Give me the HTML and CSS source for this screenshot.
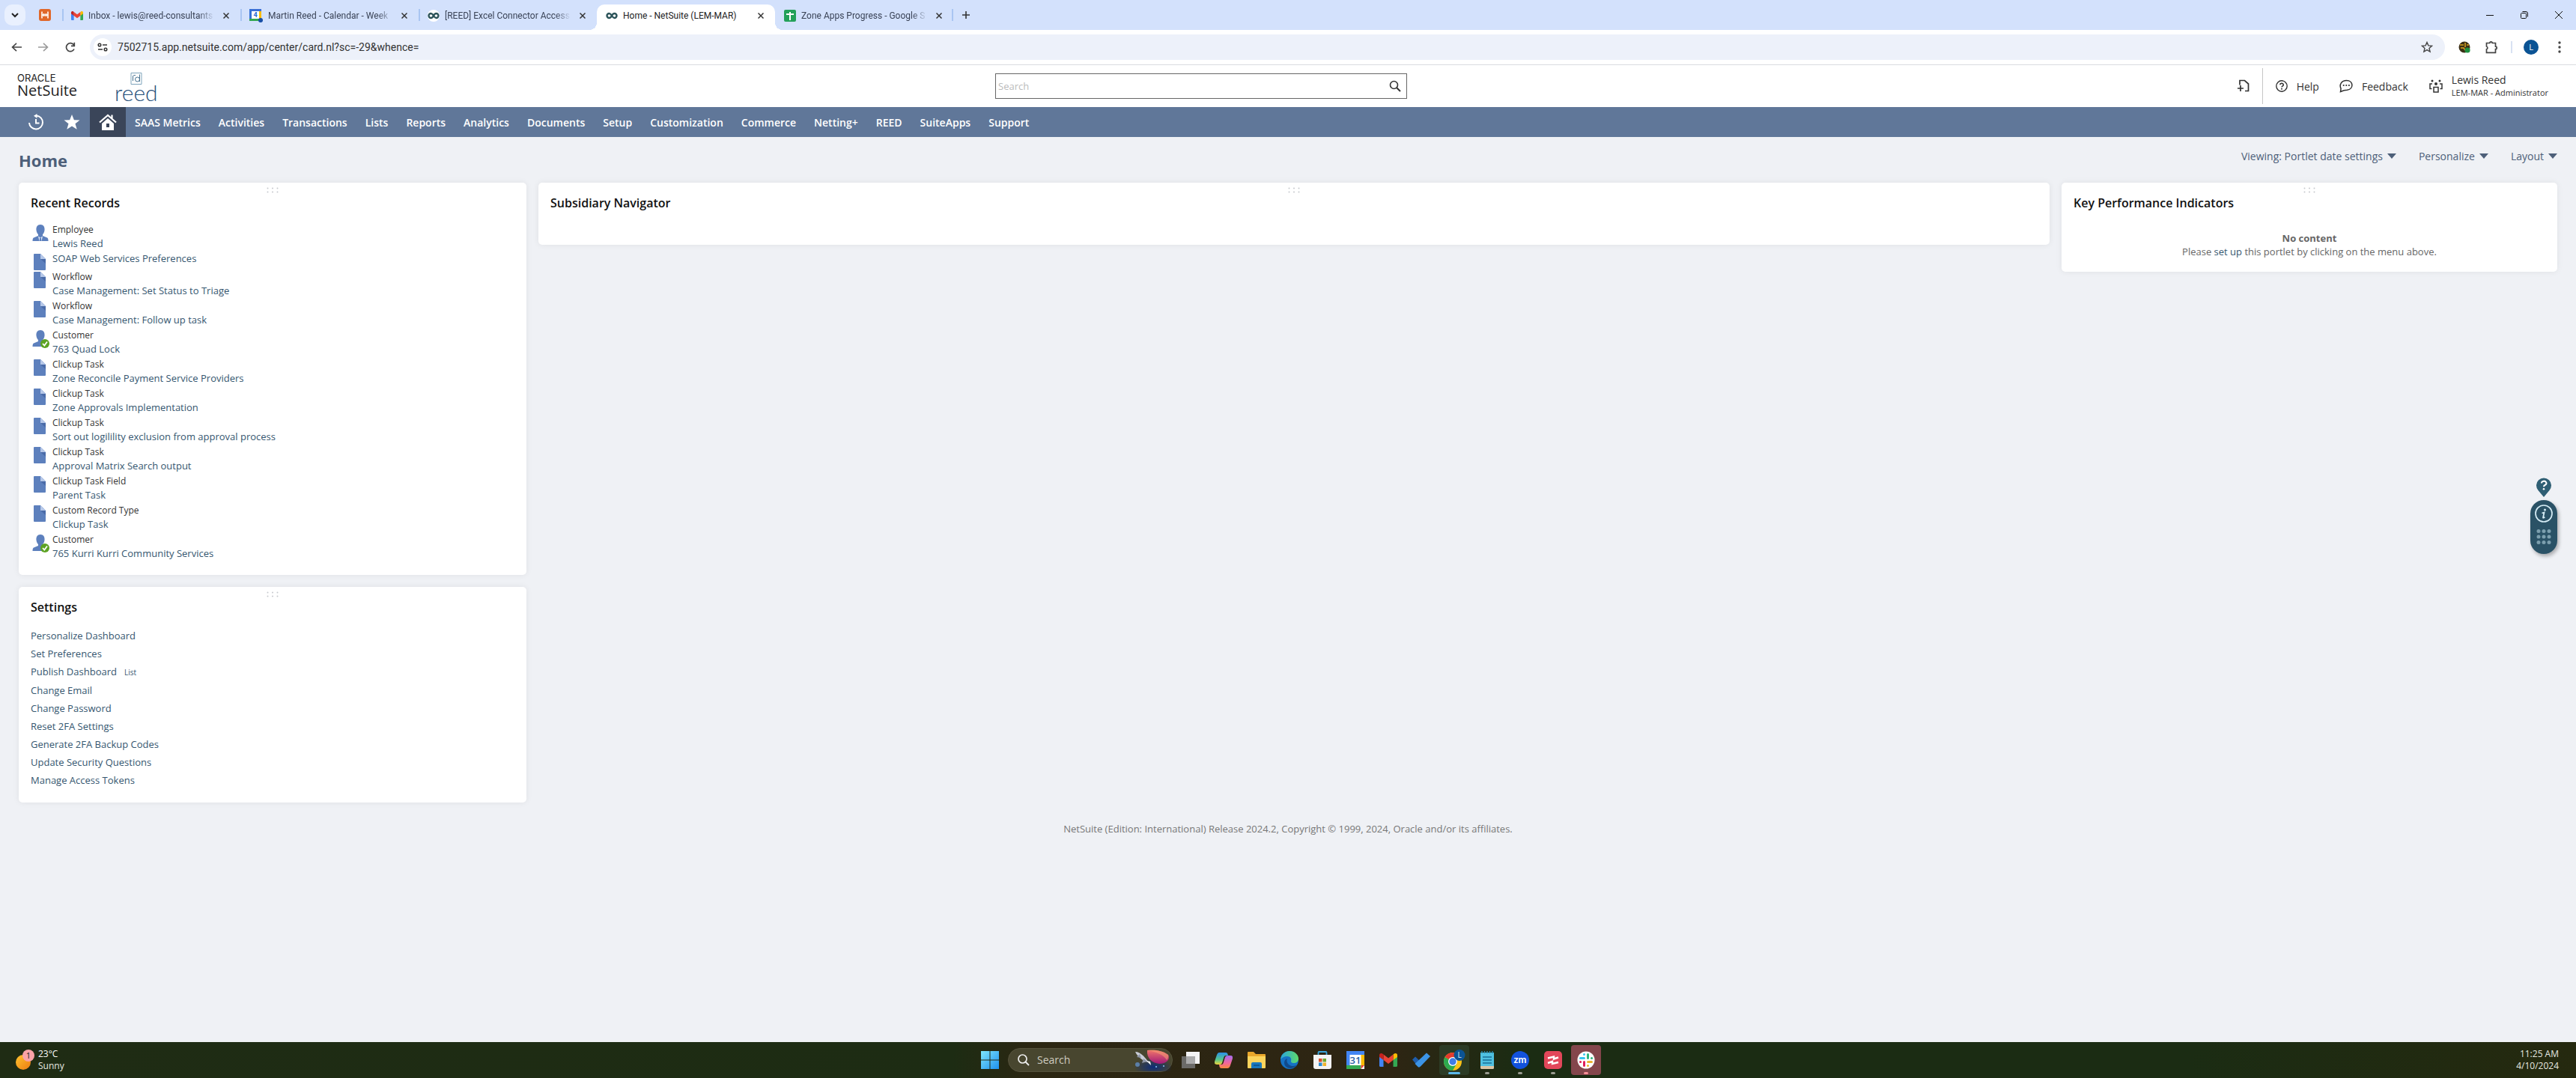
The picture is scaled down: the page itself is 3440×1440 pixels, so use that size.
FILE: index.html
```html
<!DOCTYPE html>
<html lang="en">
<head>
<meta charset="UTF-8" />
<meta name="viewport" content="width=device-width, initial-scale=1" />
<title>Home - NetSuite (LEM-MAR)</title>
<link rel="stylesheet" href="styles.css">
</head>
<body>

<svg class="sprite" aria-hidden="true">
  <symbol id="i-close" viewBox="0 0 8 8"><path d="M.5.5l7 7M7.5.5l-7 7" stroke="currentColor" stroke-width="1.5" /></symbol>
  <symbol id="i-loop" viewBox="0 0 16 16">
    <path d="M8 8C6.500 5.500 5.800 5 4.500 5a3 3 0 0 0 0 6C6 11 7 10 8 8s2-3 3.500-3a3 3 0 0 1 0 6C10.200 11 9.500 10.500 8 8z" fill="none" stroke="#2b5359" stroke-width="2.400" />
  </symbol>
  <symbol id="i-gmail" viewBox="0 0 24 18">
    <path d="M0 2v14.500Q0 18 1.500 18H5.500V7z" fill="#4285f4" />
    <path d="M24 2v14.500q0 1.500-1.500 1.500H18.500V7z" fill="#34a853" />
    <path d="M18.500 1.500V9L24 5V2.500C24 0 21-.5 19.500.7z" fill="#fbbc04" />
    <path d="M5.500 9V1.500l6.500 5 6.500-5V9L12 14z" fill="#ea4335" />
    <path d="M0 2.500V5l5.500 4V1.500L4.500.7C3-.5 0 0 0 2.500z" fill="#c5221f" />
  </symbol>
  <symbol id="i-doc" viewBox="0 0 20 22">
    <path d="M2 1q0-1 1-1h8l7 7v14q0 1-1 1H3q-1 0-1-1z" fill="#5d80bd" />
    <path d="M11 7h7v6z" fill="#4a6ba8" />
    <path d="M11 0l7 7h-7z" fill="#b5c7e8" />
  </symbol>
  <symbol id="i-person" viewBox="0 0 22 22">
    <path d="M11 0c4 0 6 3 5.500 7.500-.4 3-1.500 4.500-2.500 5.500v2l6 2.500q1.500.7 1.500 4.500H.5q0-3.800 1.500-4.500L8 15v-2C7 12 5.900 10.500 5.500 7.500 5 3 7 0 11 0z" fill="#5d80bd" />
  </symbol>
  <symbol id="i-collar" viewBox="0 0 22 22">
    <path d="M8 15.500l3 2 3-2-1.500 6.500h-3z" fill="#dfe8f7" />
    <path d="M10.200 17.500h1.600l.6 4.500h-2.800z" fill="#5d80bd" />
  </symbol>
  <symbol id="i-check" viewBox="0 0 12 12">
    <circle cx="6" cy="6" r="6" fill="#5da323" />
    <path d="M3 6l2.300 2.500L9 3.500" fill="none" stroke="#fff" stroke-width="1.800" />
  </symbol>
  <symbol id="i-grip" viewBox="0 0 16 8">
    <g fill="#c6c9ce"><circle cx="1.500" cy="1.500" r="1" /><circle cx="8" cy="1.500" r="1" /><circle cx="14.500" cy="1.500" r="1" /><circle cx="1.500" cy="6.500" r="1" /><circle cx="8" cy="6.500" r="1" /><circle cx="14.500" cy="6.500" r="1" /></g>
  </symbol>
</svg>

<div class="tabstrip">
  <button class="tab-search" aria-label="Search tabs"><svg width="10" height="7" viewBox="0 0 10 7"><path d="M1 1l4 4 4-4" fill="none" stroke="#222" stroke-width="2" /></svg></button>
  <a class="tab-pinned" href="#" aria-label="Pinned tab">
    <svg width="16" height="16" viewBox="0 0 16 16"><rect width="16" height="16" rx="3" fill="#e0672a" /><path d="M4 3.500v9M12 3.500v9M4 8h8M6.500 6v4M9.500 6v4" stroke="#fff" stroke-width="1.600" /></svg>
  </a>
  <div class="tab">
    <svg class="favicon" width="16" height="12"><use href="#i-gmail" /></svg>
    <a href="#" class="tab-title fade">Inbox - lewis@reed-consultants</a>
    <button class="tab-close" aria-label="Close tab"><svg width="8" height="8"><use href="#i-close" /></svg></button>
  </div>
  <div class="tab">
    <svg class="favicon" width="18" height="18" viewBox="0 0 18 18"><path d="M0 0h16v16H0z" fill="#fff" /><path d="M0 0h16v3H0z" fill="#3b6fd6" /><path d="M0 0h3v16H0z" fill="#3571d6" /><path d="M13 3h3v10h-3z" fill="#fbbc04" /><path d="M0 13h13v3H0z" fill="#34a853" /><text x="8" y="11" class="cal-digit" text-anchor="middle">4</text><circle cx="15" cy="15" r="3" fill="#174ea6" /></svg>
    <a href="#" class="tab-title fade">Martin Reed - Calendar - Week</a>
    <button class="tab-close" aria-label="Close tab"><svg width="8" height="8"><use href="#i-close" /></svg></button>
  </div>
  <div class="tab">
    <svg class="favicon round" width="16" height="16"><use href="#i-loop" /></svg>
    <a href="#" class="tab-title fade">[REED] Excel Connector Access</a>
    <button class="tab-close" aria-label="Close tab"><svg width="8" height="8"><use href="#i-close" /></svg></button>
  </div>
  <div class="tab active">
    <svg class="favicon" width="16" height="16"><use href="#i-loop" /></svg>
    <a href="#" class="tab-title">Home - NetSuite (LEM-MAR)</a>
    <button class="tab-close" aria-label="Close tab"><svg width="8" height="8"><use href="#i-close" /></svg></button>
  </div>
  <div class="tab last">
    <svg class="favicon" width="16" height="16" viewBox="0 0 16 16"><rect width="16" height="16" rx="2" fill="#23a05a" /><path d="M8 3v11M3 6h10" stroke="#fff" stroke-width="2" /></svg>
    <a href="#" class="tab-title fade">Zone Apps Progress - Google S</a>
    <button class="tab-close" aria-label="Close tab"><svg width="8" height="8"><use href="#i-close" /></svg></button>
  </div>
  <button class="new-tab" aria-label="New tab"><svg width="10" height="10" viewBox="0 0 10 10"><path d="M5 0v10M0 5h10" stroke="#333" stroke-width="1.600" /></svg></button>
  <div class="window-controls">
    <button aria-label="Minimize"><svg width="10" height="10" viewBox="0 0 10 10"><path d="M0 5.500h10" stroke="#111" /></svg></button>
    <button aria-label="Restore"><svg width="10" height="10" viewBox="0 0 10 10"><path d="M.5 3.500q0-1 1-1h5q1 0 1 1v5q0 1-1 1h-5q-1 0-1-1zM2.500.5H7Q9.500.5 9.500 3v4.500" fill="none" stroke="#111" /></svg></button>
    <button aria-label="Close"><svg width="10" height="10" viewBox="0 0 10 10"><path d="M0 0l10 10M10 0L0 10" stroke="#111" /></svg></button>
  </div>
</div>

<div class="toolbar">
  <button aria-label="Back"><svg width="14" height="12" viewBox="0 0 14 12"><path d="M14 6H2M7 .8L1.500 6 7 11.200" fill="none" stroke="#444" stroke-width="1.600" /></svg></button>
  <button aria-label="Forward"><svg width="14" height="12" viewBox="0 0 14 12"><path d="M0 6h12M7 .8L12.500 6 7 11.200" fill="none" stroke="#9a9a9a" stroke-width="1.600" /></svg></button>
  <button aria-label="Reload"><svg width="14" height="14" viewBox="0 0 14 14"><path d="M12 9.500A5.500 5.500 0 1 1 11.500 4M12.300.8v4.500H8" fill="none" stroke="#444" stroke-width="1.700" /></svg></button>
  <div class="address">
    <span class="site-info"><svg width="14" height="12" viewBox="0 0 14 12"><g fill="none" stroke="#333" stroke-width="1.500"><circle cx="3" cy="3" r="1.800" /><path d="M7 3h6M1 9h6" /><circle cx="11" cy="9" r="1.800" /></g></svg></span>
    <input type="text" aria-label="Address" value="7502715.app.netsuite.com/app/center/card.nl?sc=-29&amp;whence=">
    <button aria-label="Bookmark"><svg width="16" height="16" viewBox="0 0 16 16"><path d="M8 1.500l1.900 4.400 4.700.4-3.600 3.100 1.100 4.700L8 11.600l-4.100 2.500L5 9.400 1.400 6.300l4.700-.4z" fill="none" stroke="#444" stroke-width="1.400" /></svg></button>
  </div>
  <div class="toolbar-right">
    <button aria-label="Extension"><svg width="16" height="16" viewBox="0 0 16 16"><circle cx="8" cy="8" r="7.500" fill="#3b2f16" /><path d="M2 5h5M9 2v6M3 9h4l2 3M11 5h3" stroke="#d9a520" fill="none" stroke-width="1.500" /><circle cx="12" cy="12" r="3.600" fill="#1e8e3e" /></svg></button>
    <button aria-label="Extensions"><svg width="17" height="18" viewBox="0 0 17 18"><path d="M1.500 3.500h4.300a1.700 1.700 0 0 1 3.400 0h4.300v4.700a1.700 1.700 0 0 1 0 3.400v4.700H1.500v-4.500a2 2 0 0 0 0-3.800z" fill="none" stroke="#444" stroke-width="1.700" /></svg></button>
    <span class="bar"></span>
    <button class="avatar" aria-label="Profile">L</button>
    <button aria-label="Menu"><svg width="4" height="16" viewBox="0 0 4 16"><g fill="#444"><circle cx="2" cy="2" r="1.700" /><circle cx="2" cy="8" r="1.700" /><circle cx="2" cy="14" r="1.700" /></g></svg></button>
  </div>
</div>

<header class="header">
  <div class="brand">
    <a href="#" class="netsuite"><span class="oracle">ORACLE</span><span class="suite">NetSuite</span></a>
    <a href="#" class="reed">
      <svg width="16" height="16" viewBox="0 0 16 16"><g fill="none" stroke="#44708f" stroke-width="1"><path d="M1 .5h14v15H1z" stroke="#7fa4bb" /><path d="M3.500 11V4.500Q4 3.500 7 3.500M12.500 2.500V12" /><circle cx="9.500" cy="9" r="3" /></g></svg>
      <span>reed</span>
    </a>
  </div>
  <form class="search">
    <input type="text" placeholder="Search" aria-label="Search">
    <button type="button" aria-label="Search"><svg width="16" height="16" viewBox="0 0 16 16"><circle cx="6.500" cy="6.500" r="5" fill="none" stroke="#333" stroke-width="1.600" /><path d="M10.200 10.200L15 15" stroke="#333" stroke-width="2" /></svg></button>
  </form>
  <div class="header-right">
    <button class="create" aria-label="Create new"><svg width="16" height="18" viewBox="0 0 16 18"><path d="M3 7.500V1.500h6.500l5 4.500v9.500H10M0 12h8M4 8v8" fill="none" stroke="#333" stroke-width="1.700" /></svg></button>
    <a href="#" class="help"><svg width="16" height="16" viewBox="0 0 16 16"><circle cx="8" cy="8" r="7.200" fill="none" stroke="#333" stroke-width="1.400" /><path d="M5.800 6.300a2.200 2 0 1 1 3.200 1.800q-1 .5-1 1.500" fill="none" stroke="#333" stroke-width="1.600" /><circle cx="8" cy="11.800" r="1" fill="#333" /></svg>Help</a>
    <a href="#" class="feedback"><svg width="18" height="18" viewBox="0 0 18 18"><path d="M1.500 16.500l.6-4.200C-.5 7 3 1.500 9.500 1.500c9.500 0 10 11.500.8 12.800q-3.800 0-8.800 2.200z" fill="none" stroke="#333" stroke-width="1.500" /><g fill="#333"><circle cx="5.700" cy="8" r="1.100" /><circle cx="9.300" cy="8" r="1.100" /><circle cx="12.900" cy="8" r="1.100" /></g></svg>Feedback</a>
    <a href="#" class="role">
      <svg width="18" height="18" viewBox="0 0 18 18"><g fill="none" stroke="#333" stroke-width="1.500"><path d="M6 10.500h6v6.500H6zM3.500 12.500H1V6h3M14.500 12.500H17V6h-3" /></g><g fill="#333"><circle cx="9" cy="6" r="2" /><circle cx="4" cy="2" r="1.500" /><circle cx="14" cy="2" r="1.500" /></g></svg>
      <span><b>Lewis Reed</b><small>LEM-MAR - Administrator</small></span>
    </a>
  </div>
</header>

<nav class="nav">
  <a href="#" class="nav-icon" aria-label="Recent records"><svg width="22" height="22" viewBox="0 0 22 22"><g fill="none" stroke="#fff" stroke-width="2"><path d="M11.500 2.500A9 9 0 1 1 2 12" /><path d="M11 7v5.500h4.500" /></g><path d="M12.500 0v6L8 2.700z" fill="#fff" /></svg></a>
  <a href="#" class="nav-icon" aria-label="Shortcuts"><svg width="22" height="20" viewBox="0 0 22 20"><path d="M11 0l2.900 7.300 7.600.3-6 4.700 2.200 7.500L11 15.500l-6.700 4.300 2.200-7.500-6-4.700 7.600-.3z" fill="#fff" /></svg></a>
  <a href="#" class="nav-icon current" aria-label="Home"><svg width="24" height="22" viewBox="0 0 24 22"><path d="M1 11.500L12 2l11 9.500M17.500 6V1.500" fill="none" stroke="#fff" stroke-width="2.200" /><path d="M12 6l8 7v9H4v-9zM10 13v5h4v-5z" fill="#fff" fill-rule="evenodd" /></svg></a>
  <a href="#">SAAS Metrics</a>
  <a href="#">Activities</a>
  <a href="#">Transactions</a>
  <a href="#">Lists</a>
  <a href="#">Reports</a>
  <a href="#">Analytics</a>
  <a href="#">Documents</a>
  <a href="#">Setup</a>
  <a href="#">Customization</a>
  <a href="#">Commerce</a>
  <a href="#">Netting+</a>
  <a href="#">REED</a>
  <a href="#">SuiteApps</a>
  <a href="#">Support</a>
</nav>

<main class="main">
  <div class="page-head">
    <h1>Home</h1>
    <div class="page-menus">
      <button>Viewing: Portlet date settings</button>
      <button>Personalize</button>
      <button>Layout</button>
    </div>
  </div>

  <div class="columns">
    <div class="column side">
      <section class="card">
        <svg class="grip" width="16" height="8"><use href="#i-grip" /></svg>
        <h2>Recent Records</h2>
        <ul class="records">
          <li><span class="rec-icon"><svg width="22" height="22"><use href="#i-person" /><use href="#i-collar" /></svg></span><div><span>Employee</span><a href="#">Lewis Reed</a></div></li>
          <li class="single"><span class="rec-icon"><svg width="20" height="22"><use href="#i-doc" /></svg></span><div><a href="#">SOAP Web Services Preferences</a></div></li>
          <li><span class="rec-icon"><svg width="20" height="22"><use href="#i-doc" /></svg></span><div><span>Workflow</span><a href="#">Case Management: Set Status to Triage</a></div></li>
          <li><span class="rec-icon"><svg width="20" height="22"><use href="#i-doc" /></svg></span><div><span>Workflow</span><a href="#">Case Management: Follow up task</a></div></li>
          <li><span class="rec-icon"><svg width="22" height="22"><use href="#i-person" /></svg><svg class="check" width="12" height="12"><use href="#i-check" /></svg></span><div><span>Customer</span><a href="#">763 Quad Lock</a></div></li>
          <li><span class="rec-icon"><svg width="20" height="22"><use href="#i-doc" /></svg></span><div><span>Clickup Task</span><a href="#">Zone Reconcile Payment Service Providers</a></div></li>
          <li><span class="rec-icon"><svg width="20" height="22"><use href="#i-doc" /></svg></span><div><span>Clickup Task</span><a href="#">Zone Approvals Implementation</a></div></li>
          <li><span class="rec-icon"><svg width="20" height="22"><use href="#i-doc" /></svg></span><div><span>Clickup Task</span><a href="#">Sort out logilility exclusion from approval process</a></div></li>
          <li><span class="rec-icon"><svg width="20" height="22"><use href="#i-doc" /></svg></span><div><span>Clickup Task</span><a href="#">Approval Matrix Search output</a></div></li>
          <li><span class="rec-icon"><svg width="20" height="22"><use href="#i-doc" /></svg></span><div><span>Clickup Task Field</span><a href="#">Parent Task</a></div></li>
          <li><span class="rec-icon"><svg width="20" height="22"><use href="#i-doc" /></svg></span><div><span>Custom Record Type</span><a href="#">Clickup Task</a></div></li>
          <li><span class="rec-icon"><svg width="22" height="22"><use href="#i-person" /></svg><svg class="check" width="12" height="12"><use href="#i-check" /></svg></span><div><span>Customer</span><a href="#">765 Kurri Kurri Community Services</a></div></li>
        </ul>
      </section>

      <section class="card">
        <svg class="grip" width="16" height="8"><use href="#i-grip" /></svg>
        <h2>Settings</h2>
        <ul class="settings">
          <li><a href="#">Personalize Dashboard</a></li>
          <li><a href="#">Set Preferences</a></li>
          <li><a href="#">Publish Dashboard</a><a href="#" class="list-link">List</a></li>
          <li><a href="#">Change Email</a></li>
          <li><a href="#">Change Password</a></li>
          <li><a href="#">Reset 2FA Settings</a></li>
          <li><a href="#">Generate 2FA Backup Codes</a></li>
          <li><a href="#">Update Security Questions</a></li>
          <li><a href="#">Manage Access Tokens</a></li>
        </ul>
      </section>
    </div>

    <div class="column center">
      <section class="card subsidiary">
        <svg class="grip" width="16" height="8"><use href="#i-grip" /></svg>
        <h2>Subsidiary Navigator</h2>
      </section>
    </div>

    <div class="column kpi">
      <section class="card">
        <svg class="grip" width="16" height="8"><use href="#i-grip" /></svg>
        <h2>Key Performance Indicators</h2>
        <p class="empty"><b>No content</b><br>Please <a href="#">set up</a> this portlet by clicking on the menu above.</p>
      </section>
    </div>
  </div>

  <footer class="footer">NetSuite (Edition: International) Release 2024.2, Copyright © 1999, 2024, Oracle and/or its affiliates.</footer>
</main>

<!-- floating help widget -->
<div class="assist">
  <button class="pin" aria-label="Help"><svg width="20" height="26" viewBox="0 0 20 26"><path d="M10 26L2.500 17A10 10 0 1 1 17.500 17z" fill="#2f5f74" /><path d="M7 7.500a3.200 2.800 0 1 1 4.500 2.500Q10 10.800 10 12.200" fill="none" stroke="#fff" stroke-width="2" /><circle cx="10" cy="15.200" r="1.300" fill="#fff" /></svg></button>
  <div class="pill">
    <button aria-label="Info"><svg width="24" height="24" viewBox="0 0 24 24"><circle cx="12" cy="12" r="11" fill="none" stroke="#d5ecf5" stroke-width="1.700" /><circle cx="13.500" cy="7" r="1.500" fill="#d5ecf5" /><path d="M9.500 11.500l3-1-1.500 7q0 .8 2.300-.8" fill="none" stroke="#d5ecf5" stroke-width="1.800" /></svg></button>
    <svg width="20" height="20" viewBox="0 0 20 20"><g fill="#7c9fae"><circle cx="3" cy="2.500" r="2.500" /><circle cx="10" cy="2.500" r="2.500" /><circle cx="17" cy="2.500" r="2.500" /><circle cx="3" cy="10" r="2.500" /><circle cx="10" cy="10" r="2.500" /><circle cx="17" cy="10" r="2.500" /><circle cx="3" cy="17.500" r="2.500" /><circle cx="10" cy="17.500" r="2.500" /><circle cx="17" cy="17.500" r="2.500" /></g></svg>
  </div>
</div>

<div class="taskbar">
  <button class="weather">
    <svg width="28" height="30" viewBox="0 0 28 30"><defs><linearGradient id="g-sun" x2="1" y2="1"><stop stop-color="#ffc42e" /><stop offset="1" stop-color="#ee7b12" /></linearGradient></defs><circle cx="11" cy="18" r="10" fill="url(#g-sun)" /><circle cx="18" cy="9" r="8" fill="#f9a3a8" /><text x="18" y="13" text-anchor="middle" class="badge-digit">1</text></svg>
    <span><b>23°C</b><small>Sunny</small></span>
  </button>
  <div class="apps">
    <button class="app" aria-label="Start"><svg width="24" height="24" viewBox="0 0 24 24"><defs><linearGradient id="g-win" x2="1" y2="1"><stop stop-color="#7fe6fb" /><stop offset="1" stop-color="#1d8fee" /></linearGradient></defs><path d="M0 0h11.500v11.500H0zM12.500 0H24v11.500H12.500zM0 12.500h11.500V24H0zM12.500 12.500H24V24H12.500z" fill="url(#g-win)" /></svg></button>
    <label class="task-search">
      <svg width="16" height="16" viewBox="0 0 16 16"><circle cx="6.500" cy="6.500" r="5.500" fill="none" stroke="#eee" stroke-width="1.700" /><path d="M10.500 10.500L15 15" stroke="#eee" stroke-width="1.800" /></svg>
      <input type="text" placeholder="Search" aria-label="Taskbar search">
      <svg class="rocket" width="50" height="30" viewBox="0 0 50 30"><defs><radialGradient id="g-space" cy=".75" r=".55"><stop stop-color="#0f2d78" /><stop offset="1" stop-color="#0f2d78" stop-opacity="0" /></radialGradient><linearGradient id="g-moon" x2="0" y2="1"><stop stop-color="#f0766a" /><stop offset="1" stop-color="#a01878" /></linearGradient></defs><path d="M2 8h48v22H2z" fill="url(#g-space)" /><path d="M18 2c10-1 20 0 28 6 3 6-2 12-12 12C24 19 17 12 18 2z" fill="url(#g-moon)" /><path d="M18 2c10-1 20 0 28 6 1 3-1 6-2 7C40 8 30 4 18 2z" fill="#f49a72" opacity=".6" /><path d="M2 4c5 0 9 3 14 9l4 5-5-1C9 13 4 9 2 4z" fill="#c9ccd6" /><path d="M8 7l-4 4 6 1zM13 13l-2 6 7-2z" fill="#8f96a8" /><path d="M17 16l6 6-1-5z" fill="#fff" /><circle cx="5" cy="21" r="3" fill="#5b7fa8" /><circle cx="30" cy="24" r="1" fill="#8ec6f5" /><circle cx="40" cy="23" r="1" fill="#8ec6f5" /></svg>
    </label>
    <button class="app" aria-label="Task view"><svg width="24" height="22" viewBox="0 0 24 22"><path d="M6 0h18v16H6z" fill="#f4f4f4" /><path d="M0 6h18v16H0z" fill="#777" opacity=".85" /><path d="M6 6h12v10H6z" fill="#aaa" /></svg></button>
    <button class="app" aria-label="Copilot"><svg width="24" height="24" viewBox="0 0 24 24"><defs><linearGradient id="g-cop1" x2="0" y2="1"><stop stop-color="#2a8fe8" /><stop offset=".6" stop-color="#58c88a" /><stop offset="1" stop-color="#f2d33a" /></linearGradient><linearGradient id="g-cop2" x2="0" y2="1"><stop stop-color="#a46cf0" /><stop offset=".6" stop-color="#f2669a" /><stop offset="1" stop-color="#f78a3c" /></linearGradient></defs><path d="M6 2h9q2 0 2.500 2l.5 2h-3q-2 0-2.600 2L10 16q-.8 2-3 2H3q-4 0-3-4L3 5q1-3 3-3z" fill="url(#g-cop1)" /><path d="M18 6h3q4 0 3 4l-3 9q-1 4-4 4H9q-2 0-2.500-2L6 18h3q2 0 2.600-2L14 8q.8-2 4-2z" fill="url(#g-cop2)" /></svg></button>
    <button class="app" aria-label="File Explorer"><svg width="24" height="22" viewBox="0 0 24 22"><path d="M0 1q0-1 1-1h7l3 3h12q1 0 1 1v17H0z" fill="#e9a72c" /><path d="M0 6h24v15q0 1-1 1H1q-1 0-1-1z" fill="#fbd45c" /><path d="M5 22v-6q0-2 2-2h10q2 0 2 2v6z" fill="#1a78bd" /><path d="M8 18h8" stroke="#0c4f86" stroke-width="1.500" /></svg></button>
    <button class="app" aria-label="Edge"><svg width="24" height="24" viewBox="0 0 24 24"><defs><linearGradient id="g-edge" x2="1" y2="0"><stop stop-color="#2aa5dc" /><stop offset="1" stop-color="#5edb6a" /></linearGradient></defs><circle cx="12" cy="12" r="12" fill="#1672c4" /><path d="M0 11C1 4 6 0 12 0c7 0 12 5 12 10 0 4-3 6-6 6-3.500 0-4.500-1.500-4-3 1-3-1-6-5-6-4 0-7 2-9 4z" fill="url(#g-edge)" /><path d="M9 10c-2 5 2 10 8 10 2 0 4-1 5-1.500-5 7-17 5.500-17-3 0-3 2-5 4-5.500z" fill="#114a8b" /></svg></button>
    <button class="app" aria-label="Microsoft Store"><svg width="24" height="24" viewBox="0 0 24 24"><path d="M6.500 5V2q0-1 1-1h9q1 0 1 1v3" fill="none" stroke="#3aa5dc" stroke-width="1.800" /><path d="M0 5h24v16q0 3-3 3H3q-3 0-3-3z" fill="#f3f3f3" /><path d="M7 10h4.500v4.500H7z" fill="#d94f2b" /><path d="M12.500 10H17v4.500h-4.500z" fill="#6ea82e" /><path d="M7 15.500h4.500V20H7z" fill="#2b8ad0" /><path d="M12.500 15.500H17V20h-4.500z" fill="#efb32b" /></svg></button>
    <button class="app" aria-label="Google Calendar"><svg width="24" height="24" viewBox="0 0 24 24"><path d="M0 0h24v24H0z" fill="#fff" /><path d="M0 0h24v5H0zM0 0h4.500v20H0z" fill="#4285f4" /><path d="M19.500 5H24v14h-4.500z" fill="#fbbc04" /><path d="M0 19h19.500v5H0z" fill="#34a853" /><path d="M19.500 19H24l-4.500 5z" fill="#ea4335" /><text x="12" y="17" text-anchor="middle" class="cal-31">31</text></svg></button>
    <button class="app" aria-label="Gmail"><svg width="24" height="18"><use href="#i-gmail" /></svg></button>
    <button class="app" aria-label="To Do"><svg width="26" height="20" viewBox="0 0 26 20"><path d="M1 9.500l4-4L13 13l-4.500 5.500z" fill="#1f5dab" /><path d="M8.500 19L4.500 15 20 .5l5 4.500-13 13.500q-2 2-3.500.5z" fill="#3c94e6" /></svg></button>
    <button class="app running focused" aria-label="Chrome"><svg width="30" height="28" viewBox="0 0 30 28"><circle cx="13" cy="16" r="12" fill="#fbc116" /><path d="M13 16L2.600 10A12 12 0 0 0 13 28l5.200-9z" fill="#2da94f" /><path d="M2.600 10A12 12 0 0 1 23.400 10H13v6z" fill="#e33b2e" /><circle cx="13" cy="16" r="6" fill="#fff" /><circle cx="13" cy="16" r="4.700" fill="#3f7de8" /><circle cx="22" cy="7.500" r="7.500" fill="#0b5394" /><text x="22" y="11" text-anchor="middle" class="chrome-l">L</text></svg></button>
    <button class="app running" aria-label="Notepad"><svg width="20" height="24" viewBox="0 0 20 24"><path d="M1 2h18v20H1z" fill="#4fc0e0" /><path d="M1 20h18v2.500q0 1.500-1.500 1.500h-15Q1 24 1 22.500z" fill="#d9c4a4" /><path d="M4 8h12M4 12h12M4 16h12" stroke="#1b6f96" stroke-width="1.600" /><path d="M3 0v3M6.500 0v3M10 0v3M13.500 0v3M17 0v3" stroke="#2b86aa" stroke-width="1.500" /></svg></button>
    <button class="app running" aria-label="Zoom"><span class="zm">zm</span></button>
    <button class="app running" aria-label="Red app"><svg width="24" height="24" viewBox="0 0 24 24"><rect width="24" height="24" rx="5" fill="#e2475a" /><path d="M5 9.500l8-2v3l6-2M5 16l6-2v3l8-2" fill="none" stroke="#fff" stroke-width="2.400" /></svg></button>
    <button class="app running alert" aria-label="Slack"><svg width="24" height="24" viewBox="0 0 24 24"><circle cx="12" cy="12" r="11.500" fill="#fff" /><g fill="none" stroke-width="3" stroke-linecap="round"><path d="M4.500 9.500h5M9.500 4.500v.1" stroke="#36c5f0" /><path d="M14.500 4.500v5M19.500 9.500h.1" stroke="#2eb67d" /><path d="M14.500 14.500h5M14.500 19.500v-.1" stroke="#ecb22e" /><path d="M9.500 14.500v5M4.500 14.500h.1" stroke="#e01e5a" /></g></svg></button>
  </div>
  <div class="clock"><span>11:25 AM</span><span>4/10/2024</span></div>
</div>

</body>
</html>
```
FILE: styles.css
```css
* {
  box-sizing: border-box;
}
body {
  margin: 0;
  min-height: 100vh;
  display: flex;
  flex-direction: column;
  background: #eff1f5;
  font-family: "Open Sans", "Noto Sans", sans-serif;
  font-size: 13px;
  color: #333;
}
button,
input {
  font: inherit;
  color: inherit;
  border: none;
  background: none;
  padding: 0;
  margin: 0;
}
button {
  cursor: pointer;
  display: flex;
  align-items: center;
  justify-content: center;
}
a {
  color: inherit;
  text-decoration: none;
}
ul {
  list-style: none;
  margin: 0;
  padding: 0;
}
svg {
  display: block;
  flex: none;
}
.sprite {
  position: absolute;
  width: 0;
  height: 0;
}

/* browser tabs */
.tabstrip {
  display: flex;
  align-items: center;
  height: 40px;
  padding-left: 6px;
  background: #d3e1fc;
  font-family: Roboto, sans-serif;
  font-size: 12px;
}
.tab-search {
  width: 28px;
  height: 28px;
  border-radius: 10px;
  background: #e9f0fe;
}
.tab-pinned {
  width: 49px;
  padding-left: 18px;
}
.tab {
  position: relative;
  display: flex;
  align-items: center;
  width: 238px;
  height: 34px;
  align-self: flex-end;
  padding: 0 9px 4px 12px;
}
.tab::before {
  content: "";
  position: absolute;
  left: 0;
  top: 6px;
  width: 2px;
  height: 16px;
  background: #a9c5f2;
}
.favicon {
  margin-right: 7px;
}
.favicon.round {
  background: #fff;
  border-radius: 50%;
}
.tab-title {
  flex: 1;
  white-space: nowrap;
  color: #3a4356;
}
.tab-title.fade {
  mask-image: linear-gradient(to right, #000 88%, transparent);
}
.tab-close {
  width: 20px;
  height: 20px;
  margin-left: 6px;
}
.tab.active {
  background: #fff;
  border-radius: 10px 10px 0 0;
}
.tab.active .tab-title {
  color: #222;
}
.tab.active::before,
.tab.active::after {
  content: "";
  position: absolute;
  top: auto;
  bottom: 0;
  left: -10px;
  width: 10px;
  height: 10px;
  background: radial-gradient(circle at 0 0, transparent 10px, #fff 10px);
}
.tab.active::after {
  left: auto;
  right: -10px;
  background: radial-gradient(circle at 100% 0, transparent 10px, #fff 10px);
}
.tab.last::before {
  left: auto;
  right: 0;
}
.new-tab {
  width: 34px;
  height: 28px;
}
.window-controls {
  display: flex;
  margin-left: auto;
}
.window-controls button {
  width: 46px;
  height: 40px;
}

/* address bar */
.toolbar {
  display: flex;
  align-items: center;
  height: 47px;
  padding: 0 4px 1px;
  background: #fff;
  border-bottom: 1px solid #d9dbe0;
}
.toolbar button {
  width: 36px;
  height: 28px;
}
.address {
  flex: 1;
  display: flex;
  align-items: center;
  height: 34px;
  margin-left: 8px;
  padding: 0 6px 0 5px;
  border-radius: 17px;
  background: #edf1fa;
}
.site-info {
  display: flex;
  align-items: center;
  justify-content: center;
  width: 24px;
  height: 24px;
  margin-right: 8px;
  border-radius: 50%;
  background: #fff;
}
.address input {
  flex: 1;
  font-family: Roboto, sans-serif;
  font-size: 14px;
  color: #333;
}
.toolbar-right {
  display: flex;
  align-items: center;
  padding-left: 8px;
}
.toolbar-right .bar {
  width: 2px;
  height: 16px;
  margin: 0 15px 0 8px;
  background: #d8e1f2;
}
.toolbar .avatar {
  width: 20px;
  height: 20px;
  margin-right: 10px;
  border-radius: 50%;
  background: #0b5394;
  color: #fff;
  font-size: 11px;
}

/* NetSuite header */
.header {
  display: grid;
  grid-template-columns: 1329fr 550fr 1561fr;
  align-items: center;
  height: 56px;
  background: #fff;
}
.brand {
  display: flex;
  align-items: center;
  gap: 50px;
  padding-left: 23px;
}
.netsuite {
  display: flex;
  flex-direction: column;
  color: #222;
}
.oracle {
  font-family: Inter, sans-serif;
  font-size: 13px;
  line-height: 12px;
}
.suite {
  font-size: 20px;
  font-weight: 500;
  line-height: 22px;
}
.reed {
  display: flex;
  flex-direction: column;
  align-items: center;
  font-family: Lato, sans-serif;
  font-weight: 300;
  font-size: 30px;
  line-height: 20px;
  color: #1f4e79;
}
.search {
  display: flex;
  align-items: center;
  height: 34px;
  border: 1px solid #666;
}
.search input {
  flex: 1;
  padding-left: 3px;
}
.search input::placeholder {
  color: #bbb;
}
.search button {
  width: 30px;
  height: 32px;
}
.header-right {
  display: flex;
  align-items: center;
  justify-content: flex-end;
  padding-right: 37px;
  font-size: 14px;
  font-weight: 500;
}
.header-right a {
  display: flex;
  align-items: center;
  gap: 12px;
}
.create {
  height: 48px;
  padding-right: 17px;
  border-right: 1px solid #c5c5c5;
}
.help {
  margin-left: 17px;
}
.feedback {
  margin-left: 27px;
}
.role {
  margin-left: 28px;
}
.role span {
  display: flex;
  flex-direction: column;
}
.role b {
  font-weight: 500;
  line-height: 18px;
}
.role small {
  font-size: 11px;
  font-weight: 400;
  line-height: 16px;
}

.nav {
  display: flex;
  height: 40px;
  padding-left: 24px;
  background: #607799;
  color: #fff;
  font-size: 14px;
  font-weight: 600;
}
.nav a {
  display: flex;
  align-items: center;
  padding: 0 12px;
}
.nav .nav-icon {
  width: 48px;
  justify-content: center;
}
.nav .current {
  background: #3a4559;
}

/* dashboard */
.main {
  padding: 0 25px;
}
.page-head {
  display: flex;
  justify-content: space-between;
  height: 61px;
}
h1 {
  margin: 0;
  font-size: 22px;
  font-weight: 700;
  line-height: 62px;
  color: #4d5f79;
}
.page-menus {
  display: flex;
  gap: 30px;
  height: 50px;
  font-size: 14px;
  color: #4d5f79;
}
.page-menus button::after {
  content: "";
  margin-left: 6px;
  border: 6px solid transparent;
  border-top: 7px solid #4d5f79;
  border-bottom: none;
}
.columns {
  display: flex;
  align-items: flex-start;
  gap: 16px;
}
.column {
  display: flex;
  flex-direction: column;
  gap: 16px;
}
.side {
  width: 20%;
}
.center {
  flex: 1;
}
.kpi {
  width: calc(20% - 16px);
}
.card {
  position: relative;
  padding: 16px 16px 18px;
  background: #fff;
  border-radius: 5px;
  box-shadow: 0 0 8px rgba(0, 0, 0, 0.07);
}
.grip {
  position: absolute;
  top: 6px;
  left: 50%;
  margin-left: -8px;
}
h2 {
  margin: 0 0 15px;
  font-size: 16px;
  font-weight: 600;
  line-height: 22px;
  color: #111;
}
.subsidiary {
  min-height: 83px;
}
.records li {
  display: flex;
  height: 39px;
}
.records .single {
  height: 24px;
}
.rec-icon {
  position: relative;
  width: 29px;
  padding: 3px 0 0 2px;
}
.rec-icon .check {
  position: absolute;
  left: 13px;
  top: 15px;
}
.records div {
  display: flex;
  flex-direction: column;
}
.records div span {
  font-size: 12px;
  line-height: 19px;
}
.records a {
  line-height: 19px;
  color: #35566f;
}
.settings li {
  line-height: 24px;
  color: #35566f;
}
.settings .list-link {
  margin-left: 10px;
  font-size: 10px;
}
.empty {
  margin: 0;
  padding: 12px 0 0;
  text-align: center;
  line-height: 18px;
  color: #666;
}
.empty a {
  color: #35566f;
}
.footer {
  padding: 26px 0;
  text-align: center;
  line-height: 18px;
  color: #777;
}

.assist {
  position: fixed;
  right: 25px;
  top: 638px;
  display: flex;
  flex-direction: column;
  align-items: center;
  gap: 4px;
}
.pill {
  display: flex;
  flex-direction: column;
  align-items: center;
  gap: 9px;
  width: 36px;
  height: 72px;
  padding-top: 6px;
  border-radius: 18px;
  background: #2a5266;
  box-shadow: 2px 3px 5px rgba(0, 0, 0, 0.3);
}

/* windows taskbar */
.taskbar {
  display: grid;
  grid-template-columns: 1fr auto 1fr;
  align-items: center;
  height: 48px;
  margin-top: auto;
  background: linear-gradient(to right, #1f2c14, #1d2c13 37%, #2b2612 40%, #2e2513 54%, #1b2c13 59%, #1b2c13 85%, #25290f);
  font-size: 12px;
  line-height: 16px;
  color: #e6e8e0;
}
.weather {
  justify-self: start;
  gap: 3px;
  padding-left: 20px;
}
.weather span {
  display: flex;
  flex-direction: column;
  text-align: left;
}
.weather b {
  font-weight: 500;
  color: #fff;
}
.weather small {
  font-size: 12px;
}
.apps {
  display: flex;
  gap: 4px;
}
.app {
  position: relative;
  width: 40px;
  height: 40px;
  border-radius: 4px;
}
.running::after {
  content: "";
  position: absolute;
  left: 17px;
  bottom: 1px;
  width: 6px;
  height: 3px;
  border-radius: 2px;
  background: #9a9c90;
}
.focused {
  background: #2c3b25;
}
.focused::after {
  left: 12px;
  width: 16px;
  background: #5cb8ea;
}
.alert {
  background: #84464c;
}
.alert::after {
  background: #fa9098;
}
.task-search {
  display: flex;
  align-items: center;
  width: 220px;
  height: 32px;
  margin: 4px 0;
  padding: 0 1px 0 12px;
  border: 1px solid #56533d;
  border-radius: 16px;
  background: #48462f;
}
.task-search input {
  flex: 1;
  min-width: 0;
  padding-left: 10px;
  font-size: 14px;
}
.task-search input::placeholder {
  color: #cfccc0;
}
.zm {
  width: 24px;
  height: 24px;
  border-radius: 50%;
  background: #1252dc;
  color: #fff;
  font-family: Lato, sans-serif;
  font-size: 13px;
  font-weight: 700;
  line-height: 22px;
}
.clock {
  display: flex;
  flex-direction: column;
  align-items: flex-end;
  padding-right: 23px;
}
.cal-digit {
  font-size: 9px;
  font-weight: 700;
  fill: #1a66d0;
}
.cal-31 {
  font-size: 13px;
  font-weight: 600;
  fill: #2a5fa8;
}
.badge-digit {
  font-size: 11px;
  fill: #222;
}
.chrome-l {
  font-size: 10px;
  fill: #dfe9f5;
}
```
